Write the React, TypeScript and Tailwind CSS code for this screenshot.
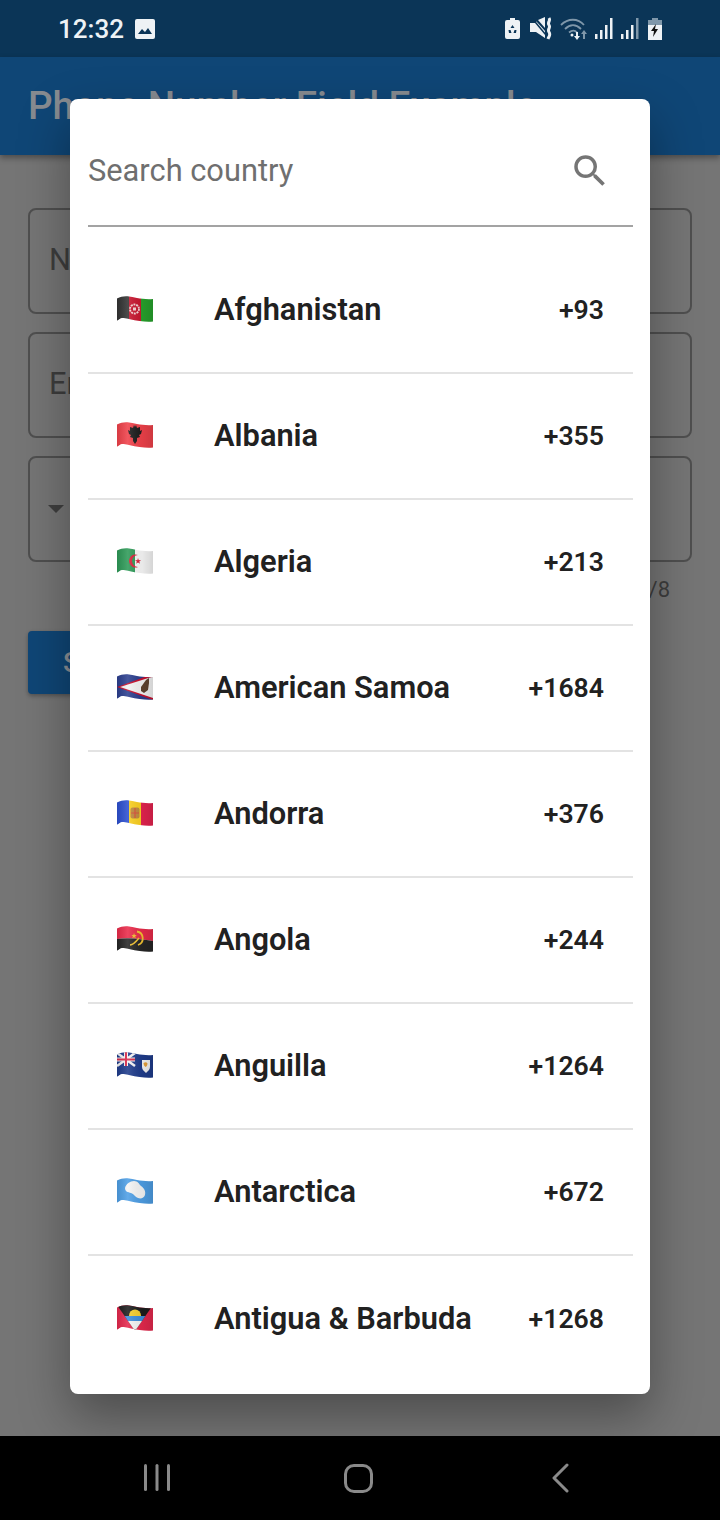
import React from "react";

interface Country {
  name: string;
  code: string;
  flag: React.ReactNode;
}

const wave = "M0 2.500C4 .5 8 0 12 .5S26 4 36 3V25.500C30 26 22 25.500 12 23S4 23 0 24.500Z";

const Flag = ({ id, children }: { id: string; children: React.ReactNode }) => (
  <svg width="36" height="26" viewBox="0 0 36 26" className="shrink-0">
    <defs>
      <clipPath id={id}>
        <path d={wave} />
      </clipPath>
      <linearGradient id={`${id}-shade`} x1="0" y1="0" x2="1" y2="0">
        <stop offset="0" stopColor="#000" stopOpacity="0.1" />
        <stop offset="0.3" stopColor="#fff" stopOpacity="0.12" />
        <stop offset="0.7" stopColor="#000" stopOpacity="0.06" />
        <stop offset="1" stopColor="#000" stopOpacity="0.14" />
      </linearGradient>
    </defs>
    <g clipPath={`url(#${id})`}>
      {children}
      <rect width="36" height="26" fill={`url(#${id}-shade)`} />
    </g>
  </svg>
);

const countries: Country[] = [
  {
    name: "Afghanistan",
    code: "+93",
    flag: (
      <Flag id="af">
        <rect width="12" height="26" fill="#333333" />
        <rect x="12" width="12" height="26" fill="#c8162f" />
        <rect x="24" width="12" height="26" fill="#27a32c" />
        <circle cx="17.500" cy="13" r="4.500" fill="none" stroke="#f4d4d4" strokeWidth="1.800" strokeDasharray="2 .8" />
        <rect x="16" y="11.500" width="3" height="3" fill="#f4d4d4" />
      </Flag>
    ),
  },
  {
    name: "Albania",
    code: "+355",
    flag: (
      <Flag id="al">
        <rect width="36" height="26" fill="#f0414a" />
        <path d="M17 3l1 2 1-2 1 3 3-1 0 4 2-1-1 4-2 1 1 2-3 1 0 3-2 3-2-3 0-3-3-1 1-2-2-1-1-4 2 1 0-4 3 1z" fill="#1c1c1c" />
      </Flag>
    ),
  },
  {
    name: "Algeria",
    code: "+213",
    flag: (
      <Flag id="dz">
        <rect width="18" height="26" fill="#2e9a58" />
        <rect x="18" width="18" height="26" fill="#f8f8f8" />
        <path d="M21 7A6.500 6.500 0 1 0 21 19A5.200 5.200 0 1 1 21 7Z" fill="#d8213b" />
        <path d="M21 10l.8 2.200 2.300-.1-1.800 1.500.7 2.200-2-1.300-1.900 1.300.7-2.200-1.800-1.500 2.300.1z" fill="#d8213b" />
      </Flag>
    ),
  },
  {
    name: "American Samoa",
    code: "+1684",
    flag: (
      <Flag id="as">
        <rect width="36" height="26" fill="#2c3f8f" />
        <path d="M0 13L36 0V26Z" fill="#c8102e" />
        <path d="M3 13L36 2.500V24Z" fill="#f5f5f5" />
        <path d="M24 13l5-7 3-2 0 5-1 7-4 3-3-2z" fill="#5f4330" />
      </Flag>
    ),
  },
  {
    name: "Andorra",
    code: "+376",
    flag: (
      <Flag id="ad">
        <rect width="12" height="26" fill="#2c4fd0" />
        <rect x="12" width="12" height="26" fill="#fbd020" />
        <rect x="24" width="12" height="26" fill="#e5234f" />
        <rect x="13.500" y="7.500" width="9" height="11" rx="2" fill="#c08a3e" />
        <path d="M18 8V18M14 13H22" stroke="#d9503a" strokeWidth="1.200" />
      </Flag>
    ),
  },
  {
    name: "Angola",
    code: "+244",
    flag: (
      <Flag id="ao">
        <path d="M0 0H36V15C24 13 12 11 0 13Z" fill="#ea2b4a" />
        <path d="M0 13C12 11 24 13 36 15V26H0Z" fill="#262626" />
        <path d="M20 5.500a7 7 0 0 1 1 13.500" fill="none" stroke="#f2c230" strokeWidth="1.800" />
        <path d="M13 19c3 0 5-2 9-7" fill="none" stroke="#f2c230" strokeWidth="1.600" />
        <path d="M17 7l.8 2 2 .1-1.600 1.200.6 2-1.800-1.100-1.700 1.100.6-2-1.500-1.200 2-.1z" fill="#f2c230" />
      </Flag>
    ),
  },
  {
    name: "Anguilla",
    code: "+1264",
    flag: (
      <Flag id="ai">
        <rect width="36" height="26" fill="#1f3c8c" />
        <path d="M0 1L18 14M18 1L0 14" stroke="#f5f5f5" strokeWidth="2.500" />
        <path d="M9 0V14M0 7.500H18" stroke="#f5f5f5" strokeWidth="4" />
        <path d="M9 0V14M0 7.500H18" stroke="#d8294a" strokeWidth="2" />
        <path d="M25 8h8v7c0 3-2.500 4.500-4 6-1.500-1.500-4-3-4-6z" fill="#f5f5f5" />
        <path d="M26.500 11c2-1 3-1 4 .5 0 2-1 3-2 3.500-1-1-2-2-2-4z" fill="#e9a33b" />
      </Flag>
    ),
  },
  {
    name: "Antarctica",
    code: "+672",
    flag: (
      <Flag id="aq">
        <rect width="36" height="26" fill="#4e9fe6" />
        <path d="M8 10C9 6 13 3 17 3C21 3 22 6 24 8C27 10 29 13 28 17C27 20 24 21 21 20C18 19 17 16 14 15C11 14 8 14 8 10Z" fill="#f5f5f5" />
      </Flag>
    ),
  },
  {
    name: "Antigua & Barbuda",
    code: "+1268",
    flag: (
      <Flag id="ag">
        <rect width="36" height="26" fill="#e5284d" />
        <path d="M0 0H36L18 26Z" fill="#1d1d1d" />
        <circle cx="18" cy="10.500" r="6" fill="#f8cf2c" />
        <path d="M7.600 11H28.400L25 16H11Z" fill="#3f8fdc" />
        <path d="M11 16H25L18 26Z" fill="#f5f5f5" />
      </Flag>
    ),
  },
];

const StatusIcons = () => (
  <div className="flex items-center pr-[58px] ml-auto">
    {/* battery saver */}
    <svg width="15" height="21" viewBox="0 0 15 21" fill="#eef2f5" className="ml-[1px]">
      <path d="M5 0h5v2h3a2 2 0 0 1 2 2v15a2 2 0 0 1-2 2H2a2 2 0 0 1-2-2V4a2 2 0 0 1 2-2h3z" />
      <path d="M7.500 7l2 3H5.500zM3.500 12l2 0 1 3H4zM11.500 12l-2 0-1 3H11z" fill="#0b3557" />
    </svg>
    {/* mute */}
    <svg width="22" height="23" viewBox="0 0 22 23" fill="#eef2f5" className="ml-[10px]">
      <path d="M0 6h5l1.500-1.500L15 14v7L6 15H0z" />
      <path d="M8 3l7-3v11z" />
      <path d="M1 0l15 18" stroke="#0b3557" strokeWidth="1.500" />
      <path d="M19 1c2 3-2 4 0 7s-2 4 0 7 0 4-1 7" fill="none" stroke="#eef2f5" strokeWidth="3" />
    </svg>
    {/* wifi */}
    <svg width="27" height="22" viewBox="0 0 27 22" fill="none" className="ml-[8px]">
      <path d="M1 7c7-7 17-7 23 0" stroke="#7f97aa" strokeWidth="1.800" />
      <path d="M5 11c5-5 11-5 16 0" stroke="#7f97aa" strokeWidth="1.800" />
      <path d="M9 14.500c3-2.500 6-2.500 8 0" stroke="#7f97aa" strokeWidth="1.800" />
      <circle cx="12" cy="17" r="1.500" fill="#eef2f5" />
      <path d="M16 14h2v4h2l-3 4-3-4h2z" fill="#eef2f5" />
      <path d="M24 12l3 4h-2v5h-2v-5h-2z" fill="#7f97aa" />
    </svg>
    {/* signal 1 */}
    <svg width="18" height="21" viewBox="0 0 18 21" fill="#eef2f5" className="ml-[8px]">
      <rect x="0" y="16" width="2.500" height="5" />
      <rect x="5" y="12" width="2.500" height="9" />
      <rect x="10" y="7" width="2.500" height="14" />
      <rect x="15" y="0" width="2.500" height="21" />
    </svg>
    {/* signal 2 */}
    <svg width="18" height="21" viewBox="0 0 18 21" fill="#eef2f5" className="ml-[8px]">
      <rect x="0" y="16" width="2.500" height="5" />
      <rect x="5" y="12" width="2.500" height="9" />
      <rect x="10" y="7" width="2.500" height="14" />
      <rect x="15" y="0" width="2.500" height="21" fill="#7f97aa" />
    </svg>
    {/* battery charging */}
    <svg width="14" height="22" viewBox="0 0 14 22" className="ml-[9px]">
      <path d="M4 0h6v2h4v20H0V2h4z" fill="#eef2f5" />
      <path d="M4 0h6v2h4v5H0V2h4z" fill="#7f97aa" />
      <path d="M8 6L3 13h3l-1 6 5-8H7z" fill="#111" />
    </svg>
  </div>
);

const FieldBox = ({ label }: { label: string }) => (
  <div className="h-[106px] rounded-lg border-2 border-[#4f4f4f] flex items-center pl-[19px] pb-[2px] text-[30.8px] text-[#3d3d3d]">
    {label}
  </div>
);

export default function App() {
  return (
    <div className="relative w-[720px] h-[1520px] overflow-hidden flex flex-col bg-[#757575] font-[Roboto,sans-serif]">
      <div className="h-[57px] shrink-0 bg-[#0b3557] flex items-center text-[#eef2f5]">
        <span className="pl-[58px] text-[26px] leading-none font-medium">12:32</span>
        <svg width="20" height="20" viewBox="0 0 20 20" className="ml-[11px]">
          <rect width="20" height="20" rx="2" fill="#eef2f5" />
          <path d="M3 15l4-5 3 3 3-4 4 6z" fill="#0b3557" />
        </svg>
        <StatusIcons />
      </div>

      <div className="h-[98px] shrink-0 bg-[#0f4676] shadow-[0_3px_6px_rgba(0,0,0,0.35)] flex items-center pl-[28px]">
        <span className="text-[38.6px] leading-none font-medium text-[#878b90] whitespace-nowrap">
          Phone Number Field Example
        </span>
      </div>

      <div className="flex-1 px-[28px] pt-[53px]">
        <div className="flex flex-col gap-[18px]">
          <FieldBox label="Name" />
          <FieldBox label="Email" />
          <div className="h-[106px] rounded-lg border-2 border-[#4f4f4f] flex items-center pl-[18px]">
            <div className="w-0 h-0 border-x-[8px] border-x-transparent border-t-[8px] border-t-[#3f3f3f]" />
          </div>
        </div>
        <div className="text-right text-[22px] leading-[26px] text-[#3d3d3d] pr-[22px] mt-[15px]">0/8</div>
        <div className="mt-[28px] w-[160px] h-[63px] rounded bg-[#0f4676] shadow-[0_2px_4px_rgba(0,0,0,0.3)] flex items-center pl-[35px] text-[28px] font-medium text-[#8c9096]">
          Submit
        </div>
      </div>

      <div className="h-[84px] shrink-0 bg-black grid grid-cols-3 items-center px-[55px]">
        <svg width="30" height="30" viewBox="0 0 30 30" className="justify-self-center ml-[1px]" fill="#8a8a8a">
          <rect x="2" y="1" width="3" height="27" rx="1.500" />
          <rect x="13.500" y="1" width="3" height="27" rx="1.500" />
          <rect x="25" y="1" width="3" height="27" rx="1.500" />
        </svg>
        <div className="justify-self-center mr-[2px] w-[29px] h-[29px] rounded-[10px] border-[3px] border-[#8a8a8a]" />
        <svg width="18" height="30" viewBox="0 0 18 30" className="justify-self-center mr-[6px]" fill="none" stroke="#8a8a8a" strokeWidth="3" strokeLinecap="round" strokeLinejoin="round">
          <path d="M16 2L3 15l13 13" />
        </svg>
      </div>

      {/* country picker dialog */}
      <div className="absolute left-[70px] top-[99px] w-[580px] h-[1295px] bg-white rounded-lg shadow-[0_22px_50px_rgba(0,0,0,0.35)] pl-[18px] pr-[17px]">
        <div className="h-[128px] pt-[19px] border-b-2 border-[#a3a3a3] flex items-center justify-between pr-[22px]">
          <span className="text-[30.8px] text-[#6f6f6f]">Search country</span>
          <svg width="42" height="42" viewBox="0 0 24 24" fill="#757575" className="mb-[2px]">
            <path d="M15.500 14h-.79l-.28-.27A6.471 6.471 0 0 0 16 9.500 6.500 6.500 0 1 0 9.500 16c1.610 0 3.090-.59 4.230-1.570l.27.28v.79l5 4.990L20.490 19l-4.990-5zm-6 0C7.010 14 5 11.990 5 9.500S7.010 5 9.500 5 14 7.010 14 9.500 11.990 14 9.500 14z" />
          </svg>
        </div>
        <div className="pt-[21px]">
          {countries.map((c, i) => (
            <div
              key={c.name}
              className={`h-[126px] flex items-center pl-[29px] pr-[29px] pb-[2px] ${
                i < countries.length - 1 ? "border-b-2 border-[#e3e3e3]" : ""
              }`}
            >
              {c.flag}
              <span className="ml-[61px] mt-[2px] text-[30.8px] font-semibold text-[#212121]">{c.name}</span>
              <span className="ml-auto mt-[2px] text-[26.6px] font-semibold text-[#212121]">{c.code}</span>
            </div>
          ))}
        </div>
      </div>
    </div>
  );
}
